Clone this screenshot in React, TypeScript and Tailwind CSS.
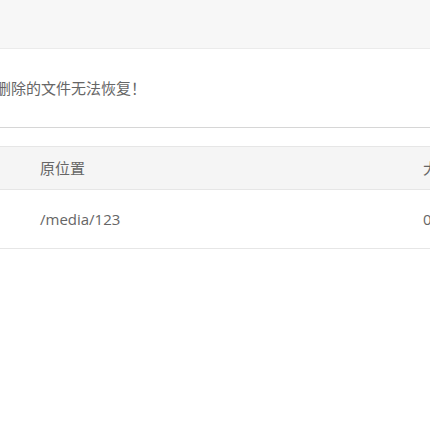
import React from "react";

const cjk = { fontFamily: '"Open Sans", "Noto Sans CJK SC", sans-serif' };

export default function App() {
  return (
    <div className="w-[430px] h-[430px] overflow-hidden bg-white" style={cjk}>
      <div className="h-[49px] bg-[#f7f7f7] border-b border-[#ebebeb]" />
      <div className="h-[79px] flex items-center border-b border-[#d6d6d6]">
        <span className="-ml-[4px] text-[15px] text-[#666666] whitespace-nowrap">删除的文件无法恢复！</span>
      </div>
      <div className="mt-[18px] w-[700px]">
        <div className="grid grid-cols-[423px_1fr] h-[44px] items-center bg-[#f5f5f5] border-y border-[#e6e6e6] text-[15px] text-[#666666]">
          <div className="pl-[40px]">原位置</div>
          <div>大小</div>
        </div>
        <div className="grid grid-cols-[423px_1fr] h-[59px] items-center border-b border-[#e6e6e6] text-[15px] text-[#666666]">
          <div className="pl-[40px]">/media/123</div>
          <div>0 B</div>
        </div>
      </div>
    </div>
  );
}
